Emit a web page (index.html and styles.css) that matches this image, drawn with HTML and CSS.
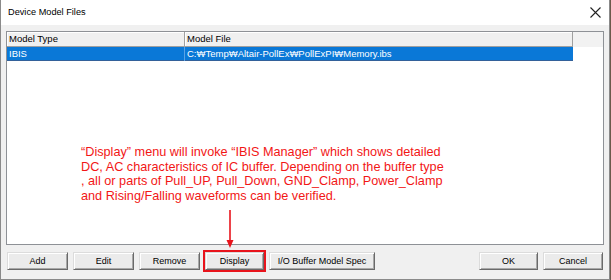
FILE: index.html
```html
<!DOCTYPE html>
<html>
<head>
	<meta charset="utf-8">
	<title>Device Model Files</title>
	<link rel="stylesheet" href="styles.css">
</head>
<body>
	<div class="dialog">
		<div class="titlebar">
			<span class="title">Device Model Files</span>
			<svg class="close" width="11" height="11" viewBox="0 0 11 11">
				<path d="M0.5 0.5 L10.5 10.5 M10.5 0.5 L0.5 10.5" stroke="#222" stroke-width="1.1" fill="none"/>
			</svg>
		</div>

		<div class="client">
			<div class="list">
				<div class="list-head">
					<div class="cell col-type">Model Type</div>
					<div class="cell col-file">Model File</div>
					<div class="head-rest"></div>
				</div>
				<div class="list-row selected">
					<div class="cell col-type">IBIS</div>
					<div class="cell col-file">C:₩Temp₩Altair-PollEx₩PollExPI₩Memory.ibs</div>
				</div>
			</div>

			<div class="buttons">
				<button class="btn w61">Add</button>
				<button class="btn w61">Edit</button>
				<button class="btn w61">Remove</button>
				<button class="btn w59 marked">Display</button>
				<button class="btn w106">I/O Buffer Model Spec</button>
				<button class="btn w59 push-right">OK</button>
				<button class="btn w60">Cancel</button>
			</div>
		</div>

		<!-- annotation drawn over the dialog -->
		<p class="note">“Display” menu will invoke “IBIS Manager” which shows detailed<br>DC, AC characteristics of IC buffer. Depending on the buffer type<br>, all or parts of Pull_UP, Pull_Down, GND_Clamp, Power_Clamp<br>and Rising/Falling waveforms can be verified.</p>
		<svg class="arrow" width="10" height="40" viewBox="0 0 10 40">
			<path d="M5 0 L5 32" stroke="#e8141c" stroke-width="1.6" fill="none"/>
			<path d="M1.5 30 L8.5 30 L5 38 Z" fill="#e8141c"/>
		</svg>
	</div>
</body>
</html>
```

FILE: styles.css
```css
* {
	box-sizing: border-box;
}

html, body {
	margin: 0;
	height: 100%;
}

body {
	background: #6b5a4a;
	font-family: "Liberation Sans", Arial, sans-serif;
	overflow: hidden;
}

.dialog {
	position: relative;
	width: 610px;
	height: 280px;
	display: flex;
	flex-direction: column;
	border-left: 1px solid #8a8a8a;
	border-right: 1px solid #8a8a8a;
	border-bottom: 1px solid #8a8a8a;
	background: #f0f0f0;
}

.titlebar {
	height: 25px;
	flex: none;
	display: flex;
	align-items: center;
	justify-content: space-between;
	padding: 0 7px 1px 7px;
	background: #fff;
}

.title {
	font-size: 9.2px;
	color: #000;
}

.close {
	display: block;
	margin-right: 1px;
}

.client {
	flex: 1;
	display: flex;
	flex-direction: column;
	padding: 6px 5px 0 5px;
}

.list {
	height: 214px;
	flex: none;
	border: 1px solid #8e9196;
	background: #fff;
}

.list-head {
	display: flex;
	height: 15px;
}

.list-head .cell {
	background: #f0f0f0;
	border-right: 1px solid #a0a0a0;
	border-bottom: 1px solid #a0a0a0;
	box-shadow: inset 1px 1px #fff;
	color: #000;
}

.head-rest {
	flex: 1;
	background: #f2f2f2;
}

.cell {
	font-size: 9.5px;
	line-height: 14px;
	padding-left: 2px;
	white-space: nowrap;
}

.col-type {
	width: 178px;
}

.col-file {
	width: 388px;
}

.list-row {
	display: flex;
	height: 14px;
	width: 566px;
}

.list-row .cell {
	line-height: 13px;
}

.selected {
	background: #0a78d7;
	box-shadow: inset 0 -1px #33619a;
	color: #fff;
}

.selected .col-type {
	border-right: 1px solid #5aa3e6;
}

.buttons {
	display: flex;
	gap: 5px;
	margin-top: 7px;
	padding: 0 1px;
}

.btn {
	height: 18px;
	padding: 0;
	font-family: "Liberation Sans", Arial, sans-serif;
	font-size: 9px;
	color: #000;
	background: #ebebeb;
	border: 1px solid;
	border-color: #dcdcdc #6a6a6a #6a6a6a #dcdcdc;
	box-shadow: inset 1px 1px #fff, inset -1px -1px #a8a8a8;
	border-radius: 0;
}

.w59 { width: 59px; }
.w60 { width: 60px; }
.w61 { width: 61px; }
.w106 { width: 106px; }

.push-right {
	margin-left: auto;
}

.marked {
	outline: 2px solid #e8141c;
	outline-offset: 0;
}

.note {
	position: absolute;
	left: 80px;
	top: 145px;
	margin: 0;
	font-family: "Liberation Sans", Arial, sans-serif;
	font-size: 12.7px;
	line-height: 14.5px;
	color: #f21616;
	white-space: nowrap;
}

.arrow {
	position: absolute;
	left: 224px;
	top: 210px;
}
```
